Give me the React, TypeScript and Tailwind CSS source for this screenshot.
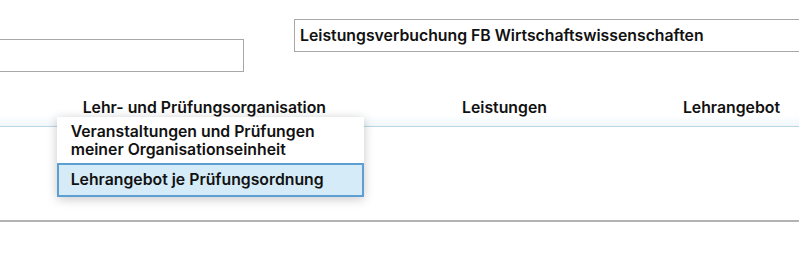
import React from 'react';

const navItems = ['Lehr- und Prüfungsorganisation', 'Leistungen', 'Lehrangebot'];

const App: React.FC = () => {
  return (
    <div className="w-[799px] h-[275px] bg-white overflow-hidden font-['Inter',sans-serif] text-[15.8px] font-semibold text-[#111]">
      {/* Header fields */}
      <div className="flex items-start gap-[50px] pt-[19px]">
        <div className="mt-[20px] h-[33px] w-[244px] shrink-0 border border-l-0 border-[#a8a8a8]" />
        <div className="flex h-[33px] flex-1 items-center border border-r-0 border-[#a8a8a8] pl-[5px]">
          Leistungsverbuchung FB Wirtschaftswissenschaften
        </div>
      </div>

      {/* Navigation */}
      <div className="mt-[26px] border-b border-[#b9d6e6] bg-gradient-to-b from-white from-60% to-[#f1f7fa] pb-[8px]">
        <div className="flex justify-end gap-[136px] pr-[19px]">
          {navItems.map((item, i) => (
            <div key={item} className="relative h-[20px] leading-[20px] whitespace-nowrap">
              {item}
              {i === 0 && (
                <div className="absolute left-[-26px] top-[19px] z-10 w-[307px] bg-white shadow-[0_2px_10px_rgba(0,0,0,0.22)]">
                  <div className="px-[14px] pt-[6px] pb-[4px] leading-[18px]">
                    Veranstaltungen und Prüfungen
                    <br />
                    meiner Organisationseinheit
                  </div>
                  <div className="flex h-[34px] items-center border-2 border-[#5d9fd3] bg-[#d5ebf8] px-[12px]">
                    Lehrangebot je Prüfungsordnung
                  </div>
                </div>
              )}
            </div>
          ))}
        </div>
      </div>

      {/* Content area */}
      <div className="h-[95px] border-b-2 border-[#b3b3b3]" />
    </div>
  );
};

export default App;
